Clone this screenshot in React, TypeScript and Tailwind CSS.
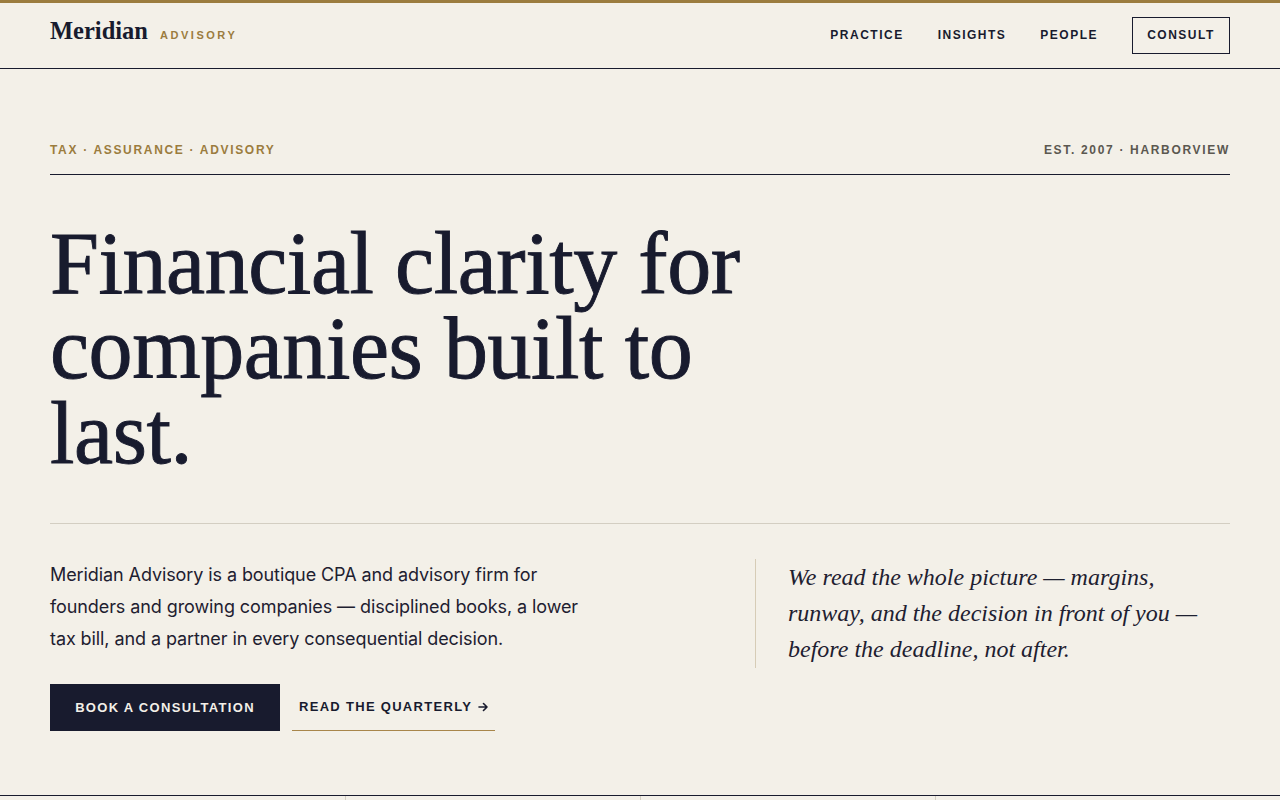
import React from "react";

const serif = { fontFamily: '"Liberation Serif", "Times New Roman", serif' };

const navItems = ["PRACTICE", "INSIGHTS", "PEOPLE"];

const stats = [
  { value: "18", label: "Years in practice" },
  { value: "240+", label: "Clients advised" },
  { value: "$1.2B", label: "Revenue under review" },
  { value: "96%", label: "Client retention" },
];

function Arrow() {
  return (
    <svg
      width="10"
      height="10"
      viewBox="0 0 10 10"
      fill="none"
      stroke="currentColor"
      strokeWidth="1.6"
      strokeLinecap="round"
      strokeLinejoin="round"
      className="ml-[6px]"
    >
      <path d="M1 5h8M5.5 1.5 9 5l-3.5 3.5" />
    </svg>
  );
}

export default function App() {
  return (
    <div
      className="min-h-screen bg-[#f3f0e8] text-[#181b2e]"
      style={{ fontFamily: '"Liberation Sans", Arial, sans-serif' }}
    >
      <div className="h-[3px] bg-[#9b7c3e]" />
      <header className="h-[66px] border-b border-[#181b2e] px-[50px] flex items-center justify-between">
        <div className="flex items-baseline gap-[12px] pb-[8px]">
          <span style={serif} className="text-[24.5px] font-bold leading-none">
            Meridian
          </span>
          <span className="text-[11px] font-semibold tracking-[0.23em] text-[#9b7c3e]">
            ADVISORY
          </span>
        </div>
        <nav className="flex items-center pb-[1px]">
          {navItems.map((item) => (
            <a
              key={item}
              href="#"
              className="text-[12px] font-bold tracking-[0.125em] mr-[34px]"
            >
              {item}
            </a>
          ))}
          <a
            href="#"
            className="h-[37px] w-[98px] flex items-center justify-center border border-[#181b2e] text-[12px] font-bold tracking-[0.125em]"
          >
            CONSULT
          </a>
        </nav>
      </header>

      <main className="px-[50px] pt-[73px]">
        <div className="flex items-center justify-between pb-[16px] border-b border-[#181b2e] text-[12px] font-bold tracking-[0.14em] leading-4">
          <span className="text-[#9b7c3e]">TAX · ASSURANCE · ADVISORY</span>
          <span className="text-[#5b5850]">EST. 2007 · HARBORVIEW</span>
        </div>

        <h1
          style={serif}
          className="mt-[46px] max-w-[720px] text-[88px] leading-[85px] font-normal tracking-[-0.005em] [-webkit-text-stroke:0.9px_#181b2e]"
        >
          Financial clarity for companies built to last.
        </h1>

        <div className="mt-[47px] border-t border-[#d3cec2] pt-[35px] grid grid-cols-[705px_1fr]">
          <div>
            <p
              className="max-w-[545px] text-[18px] leading-[32px] text-[#1e2030] tracking-[-0.005em]"
              style={{ fontFamily: 'Inter, "Liberation Sans", Arial, sans-serif' }}
            >
              Meridian Advisory is a boutique CPA and advisory firm for founders and growing
              companies — disciplined books, a lower tax bill, and a partner in every
              consequential decision.
            </p>
            <div className="mt-[29px] flex items-center gap-[12px]">
              <a
                href="#"
                className="h-[47px] w-[230px] flex items-center justify-center bg-[#181b2e] text-[#f3f0e8] text-[13px] font-bold tracking-[0.1em]"
              >
                BOOK A CONSULTATION
              </a>
              <a
                href="#"
                className="h-[47px] px-[7px] flex items-center border-b border-[#a8864a] text-[13px] font-bold tracking-[0.1em]"
              >
                READ THE QUARTERLY
                <Arrow />
              </a>
            </div>
          </div>
          <blockquote
            style={serif}
            className="self-start border-l border-[#d6ccb6] pl-[32px] pt-[0px] pb-[1px] text-[24px] leading-[36px] italic text-[#1e2030]"
          >
            We read the whole picture — margins, runway, and the decision in front of you —
            before the deadline, not after.
          </blockquote>
        </div>
      </main>

      <section className="mt-[64px] border-t border-[#181b2e]">
        <div className="mx-[50px] grid grid-cols-4">
          {stats.map((s, i) => (
            <div
              key={s.label}
              className={`py-[28px] px-[24px] ${i > 0 ? "border-l border-[#d3cec2]" : "pl-0"}`}
            >
              <div style={serif} className="text-[40px] leading-none">
                {s.value}
              </div>
              <div className="mt-2 text-[12px] font-bold tracking-[0.14em] uppercase text-[#5b5850]">
                {s.label}
              </div>
            </div>
          ))}
        </div>
      </section>
    </div>
  );
}
